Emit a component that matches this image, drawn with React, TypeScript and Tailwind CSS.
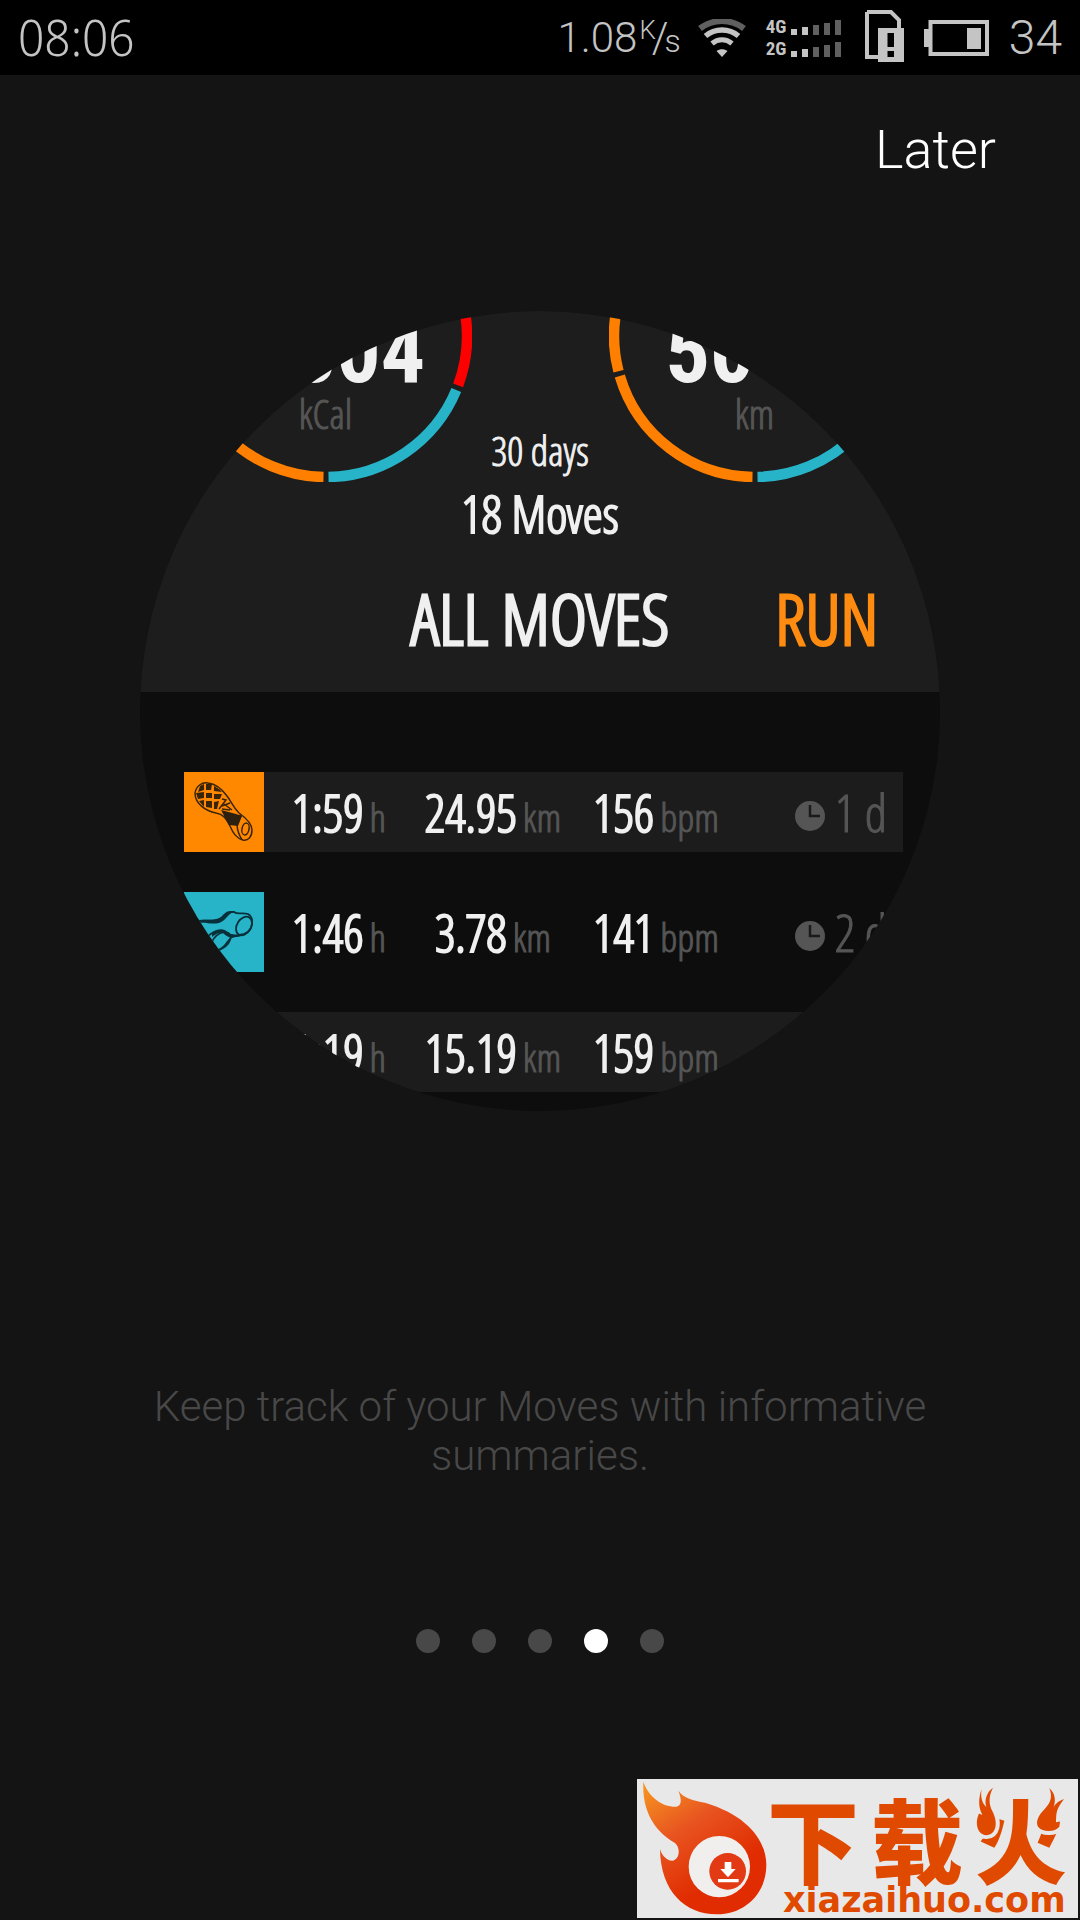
const CONDENSED = "font-['Open_Sans_Condensed_Light','Roboto_Condensed',sans-serif]";

const moves = [
  { sport: "run", time: "1:59", distance: "24.95", pulse: "156", age: "1 d" },
  { sport: "swim", time: "1:46", distance: "3.78", pulse: "141", age: "2 d" },
  { sport: "", time: "1:19", distance: "15.19", pulse: "159", age: "" },
];

// Point on the 292px summary ring, degrees clockwise from 3 o'clock
const point = (deg: number) => {
  const rad = (deg * Math.PI) / 180;
  return `${(146 + 141 * Math.cos(rad)).toFixed(1)} ${(146 + 141 * Math.sin(rad)).toFixed(1)}`;
};

const Arc = ({ from, to, color }: { from: number; to: number; color: string }) => (
  <path d={`M${point(from)} A141 141 0 0 1 ${point(to)}`} fill="none" stroke={color} strokeWidth="10.5" />
);

type RingProps = {
  value: string;
  unit: string;
  arcs: { from: number; to: number; color: string }[];
};

const Ring = ({ value, unit, arcs }: RingProps) => (
  <div className="relative h-[292px] w-[292px] pt-[118px] text-center">
    <svg viewBox="0 0 292 292" className="absolute inset-0" aria-hidden="true">
      {arcs.map((arc) => (
        <Arc key={arc.from} {...arc} />
      ))}
    </svg>
    <p className="font-['Roboto_Condensed',sans-serif] text-[88px] leading-[88px] font-bold text-[#f0f0f0]">{value}</p>
    <p className={`${CONDENSED} text-[40px] leading-[36px] text-[#555] [-webkit-text-stroke:1px]`}>{unit}</p>
  </div>
);

const RunIcon = () => (
  <svg viewBox="0 0 80 80" className="block h-20 w-20 bg-[#ff8800]" aria-label="Run">
    <g fill="none" stroke="#3a2408" strokeWidth="1.5">
      <path d="M11 21C12 14 18 10 24 11C32 12 38 17 43 24C47 29 49 35 55 41C62 46 68 52 68 58C68 65 64 69 59 68C52 66 49 61 46 54C42 46 39 42 32 41C22 39 11 32 11 21Z" />
      <path d="M57 42C52 48 51 56 58 68" />
      <ellipse cx="61.5" cy="57" rx="3.5" ry="6" transform="rotate(12 61.5 57)" />
    </g>
    <path d="M37 38L52 42L58 44L54 54L45 53Z" fill="#2c2010" />
    <g fill="#3a2408">
      <path d="M16 14L20 12V18L14 20ZM22 12L28 12L27 18L22 18ZM30 14L35 17L38 20L30 19Z" />
      <path d="M12 21L20 20V26L14 27ZM22 21L28 21V26L22 26ZM30 22L38 22L36 27L30 27Z" />
      <path d="M15 29L20 28V35ZM22 29H28V36L22 35ZM30 30L35 29L33 37L30 37Z" />
    </g>
    <path d="M38 27L42 28L35 37M38 37L46 38M38 34L46 31M40 32L48 38" fill="none" stroke="#3a2408" strokeWidth="1.5" />
  </svg>
);

const SwimIcon = () => (
  <svg viewBox="0 0 80 80" className="block h-20 w-20 bg-[#28b4c8]" aria-label="Swim">
    <g fill="none" stroke="#08303a" strokeWidth="1.8" strokeLinejoin="round">
      <path d="M10 30C18 27 26 30 33 28C41 26 43 19 50 20C54 23 58 20 64 22C69 25 69 31 67 36C63 43 56 43 50 44C44 46 44 52 38 56C34 60 30 60 26 58" />
      <path d="M24 44C31 38 39 36 43 41C48 45 55 45 58 42" />
      <ellipse cx="60" cy="34" rx="7" ry="10" transform="rotate(32 60 34)" />
      <ellipse cx="37" cy="49" rx="11" ry="7" transform="rotate(-40 37 49)" />
    </g>
    <path d="M12 29C20 26 30 30 37 25C41 21 44 17 50 20C44 21 43 28 35 31C26 33 20 29 12 32Z" fill="#08303a" />
    <path d="M28 42C35 36 41 38 46 42L56 43C48 48 43 45 39 41C35 40 32 42 28 45Z" fill="#08303a" />
  </svg>
);

const ClockIcon = () => (
  <svg viewBox="0 0 30 30" className="mt-2 h-[30px] w-[30px]" aria-hidden="true">
    <circle cx="15" cy="15" r="15" fill="#555" />
    <path d="M15 4V15H25" fill="none" stroke="#1a1a1a" strokeWidth="2.5" />
  </svg>
);

const Measure = ({ value, unit }: { value: string; unit: string }) => (
  <span className="flex items-baseline justify-center gap-[6px]">
    <span className="text-[51px] leading-[74px] text-[#f0f0f0] [-webkit-text-stroke:2px]">{value}</span>
    <span className="text-[39px] leading-[64px] text-[#555] [-webkit-text-stroke:1px]">{unit}</span>
  </span>
);

const MovesTable = () => (
  <table className={`${CONDENSED} mt-10 ml-11 w-[719px] table-fixed border-separate border-spacing-x-0 border-spacing-y-10`}>
    <tbody>
      {moves.map((move) => (
        <tr key={move.time} className="h-20 odd:bg-[#1c1c1c]">
          <td className="w-20 p-0">
            {move.sport === "run" && <RunIcon />}
            {move.sport === "swim" && <SwimIcon />}
          </td>
          <td className="w-[150px] p-0">
            <Measure value={move.time} unit="h" />
          </td>
          <td className="w-[158px] p-0">
            <Measure value={move.distance} unit="km" />
          </td>
          <td className="w-[168px] p-0">
            <Measure value={move.pulse} unit="bpm" />
          </td>
          <td className="p-0 pr-4">
            {move.age && (
              <span className="flex items-center justify-end gap-[10px] text-[51px] leading-[74px] text-[#555] [-webkit-text-stroke:1px]">
                <ClockIcon />
                {move.age}
              </span>
            )}
          </td>
        </tr>
      ))}
    </tbody>
  </table>
);

const Preview = () => (
  <section className="mx-auto mt-[126px] h-[800px] w-[800px] overflow-hidden rounded-full bg-[#0d0d0d]">
    <div className="h-[381px] overflow-hidden bg-[#1d1d1d] text-[#f0f0f0]">
      <div className="-mt-[121px] flex justify-center gap-[137px]">
        <Ring
          value="1,804"
          unit="kCal"
          arcs={[
            { from: -40, to: 20.5, color: "#ff0000" },
            { from: 22.5, to: 89, color: "#28b4c8" },
            { from: 91, to: 180, color: "#ff8000" },
          ]}
        />
        <Ring
          value="5080"
          unit="km"
          arcs={[
            { from: 0, to: 89, color: "#28b4c8" },
            { from: 91, to: 163.5, color: "#ff8000" },
            { from: 165.5, to: 220, color: "#ff8000" },
          ]}
        />
      </div>
      <div className={`${CONDENSED} -mt-14 text-center`}>
        <p className="text-[40px] leading-[50px] [-webkit-text-stroke:1px]">30 days</p>
        <p className="text-[51px] leading-[74px] [-webkit-text-stroke:2px]">18 Moves</p>
        <div className="mt-5 grid grid-cols-[1fr_auto_1fr] text-[71px] leading-[96px] [-webkit-text-stroke:3px]">
          <button type="button" className="col-start-2">
            ALL MOVES
          </button>
          <button type="button" className="justify-self-start pl-[106px] text-[#ff8c10]">
            RUN
          </button>
        </div>
      </div>
    </div>
    <MovesTable />
  </section>
);

const Signal = ({ label }: { label: string }) => (
  <div className="flex items-end gap-[5px]">
    <span className="w-[20px] font-['Roboto_Condensed',sans-serif] text-[19px] leading-[16px] font-bold">{label}</span>
    <span className="flex items-end gap-[5px]">
      <span className="h-[6px] w-[6px] bg-[#c4c4c4]" />
      <span className="h-2 w-[6px] bg-[#c4c4c4]" />
      <span className="h-[10px] w-[6px] bg-[#606060]" />
      <span className="h-3 w-[6px] bg-[#606060]" />
      <span className="h-[15px] w-[6px] bg-[#606060]" />
    </span>
  </div>
);

const WifiIcon = () => (
  <svg viewBox="0 0 48 38" className="h-[38px] w-12" fill="none" aria-hidden="true">
    <path d="M2 9.500C15 -0.500 33 -0.500 46 9.500" stroke="#606060" strokeWidth="6" />
    <path d="M7.500 17C17 9 31 9 40.500 17" stroke="#c4c4c4" strokeWidth="5.500" />
    <path d="M14 24.500C20 19.500 28 19.500 34 24.500" stroke="#c4c4c4" strokeWidth="5" />
    <path d="M18.500 32C22 29.500 26 29.500 29.500 32L24 38Z" fill="#c4c4c4" />
  </svg>
);

const SimIcon = () => (
  <svg viewBox="0 0 39 52" className="h-[52px] w-[39px]" aria-hidden="true">
    <path d="M2 2H26L34 10V20M2 2V47H14" fill="none" stroke="#c4c4c4" strokeWidth="4" />
    <path d="M13 18H39V52H13Z" fill="#c4c4c4" />
    <path d="M22.500 23H29V37H22.500ZM22.500 41H29V47H22.500Z" fill="#000" />
  </svg>
);

const BatteryIcon = () => (
  <svg viewBox="0 0 65 36" className="h-9 w-[65px]" aria-hidden="true">
    <path d="M0 9H5V27H0Z" fill="#c4c4c4" />
    <path d="M6.500 2H63V34H6.500Z" fill="none" stroke="#c4c4c4" strokeWidth="4" />
    <path d="M43 8H57V29H43Z" fill="#c4c4c4" />
  </svg>
);

const StatusBar = () => (
  <div className="flex h-[75px] items-center justify-between bg-black px-[18px] text-[#c4c4c4]">
    <span className="font-['Noto_Sans_Display','Noto_Sans',sans-serif] text-[49px] leading-[77px] font-light">08:06</span>
    <div className="flex items-center">
      <span className="flex h-[75px] font-light">
        <span className="text-[42px] leading-[75px]">1.08</span>
        <span className="pt-[14px] pl-[2px] text-[26px] leading-[32px]">K</span>
        <span className="-ml-1 text-[42px] leading-[75px]">/</span>
        <span className="-ml-1 text-[32px] leading-[82px]">s</span>
      </span>
      <div className="ml-[17px]">
        <WifiIcon />
      </div>
      <div className="ml-5 grid gap-[6px]">
        <Signal label="4G" />
        <Signal label="2G" />
      </div>
      <div className="mb-1 ml-6">
        <SimIcon />
      </div>
      <div className="ml-5">
        <BatteryIcon />
      </div>
      <span className="ml-5 text-[48px] leading-[78px] font-light">34</span>
    </div>
  </div>
);

const Flames = () => (
  <svg viewBox="645 40 290 250" className="absolute -top-1 -left-1 h-[83px] w-[97px]" aria-hidden="true">
    <g fill="#df4a00" stroke="#e8e8e8" strokeWidth="24" paintOrder="stroke" strokeLinejoin="round">
      <path d="M676 46C664 80 668 104 678 124L668 120C654 150 664 184 690 185C718 184 728 150 708 112C698 92 696 70 710 42C690 56 684 80 690 100C676 88 672 66 676 46Z" />
      <path d="M880 44C890 70 884 88 866 106C846 126 838 144 846 160C860 178 898 176 910 160L912 144L900 146C902 126 896 112 924 76C904 84 896 92 892 104C900 80 898 60 880 44Z" />
    </g>
  </svg>
);

const Watermark = () => (
  <a
    href="#xiazaihuo"
    className="absolute right-[2px] bottom-[2px] flex h-[139px] w-[441px] bg-[#e8e8e8] text-[#df4a00]"
  >
    <svg viewBox="21 27 390 417" className="h-[139px] w-[130px] shrink-0" aria-hidden="true">
      <defs>
        <linearGradient id="flame" x1="0" y1="0" x2="0.5" y2="0.8">
          <stop offset="0" stopColor="#f79a20" />
          <stop offset="0.5" stopColor="#e85420" />
          <stop offset="1" stopColor="#e02c00" />
        </linearGradient>
      </defs>
      <path
        d="M40 35C58 85 100 112 140 110C157 106 154 84 145 62C160 84 190 92 225 98C350 135 409 210 409 285C409 370 345 433 260 433C165 433 92 365 90 238C98 262 114 273 128 272C150 268 152 232 134 218C85 190 35 135 40 35Z"
        fill="url(#flame)"
      />
      <circle cx="268" cy="290" r="92" fill="#f0efee" />
      <circle cx="293" cy="304" r="55" fill="#e23a14" />
      <path d="M284 276H304V297H317L294 322L271 297H284ZM264 327H326V337H264Z" fill="#fff" />
    </svg>
    <div>
      <p className="flex gap-3 pt-3 font-['Noto_Sans_CJK_SC',sans-serif] text-[92px] leading-[92px] font-black">
        <span>下</span>
        <span>载</span>
        <span className="relative">
          火
          <Flames />
        </span>
      </p>
      <p className="mt-1 ml-4 font-['DejaVu_Sans',sans-serif] text-[35px] leading-[26px] font-bold">xiazaihuo.com</p>
    </div>
  </a>
);

const App = () => {
  return (
    <main className="relative min-h-screen bg-[#141414] font-['Roboto',sans-serif]">
      <StatusBar />
      <div className="flex justify-end pt-10 pr-[84px]">
        <button type="button" className="text-[54px] leading-[70px] font-light text-white">
          Later
        </button>
      </div>
      <Preview />
      <p className="mx-auto mt-[271px] max-w-[840px] text-center text-[42px] leading-[49px] font-light text-[#484848]">
        Keep track of your Moves with informative summaries.
      </p>
      <div className="mt-[149px] flex justify-center gap-8">
        {[1, 2, 3, 4, 5].map((page) => (
          <button
            key={page}
            type="button"
            aria-label={`Page ${page}`}
            className={page === 4 ? "h-6 w-6 rounded-full bg-white" : "h-6 w-6 rounded-full bg-[#484848]"}
          />
        ))}
      </div>
      <Watermark />
    </main>
  );
};

export default App;
